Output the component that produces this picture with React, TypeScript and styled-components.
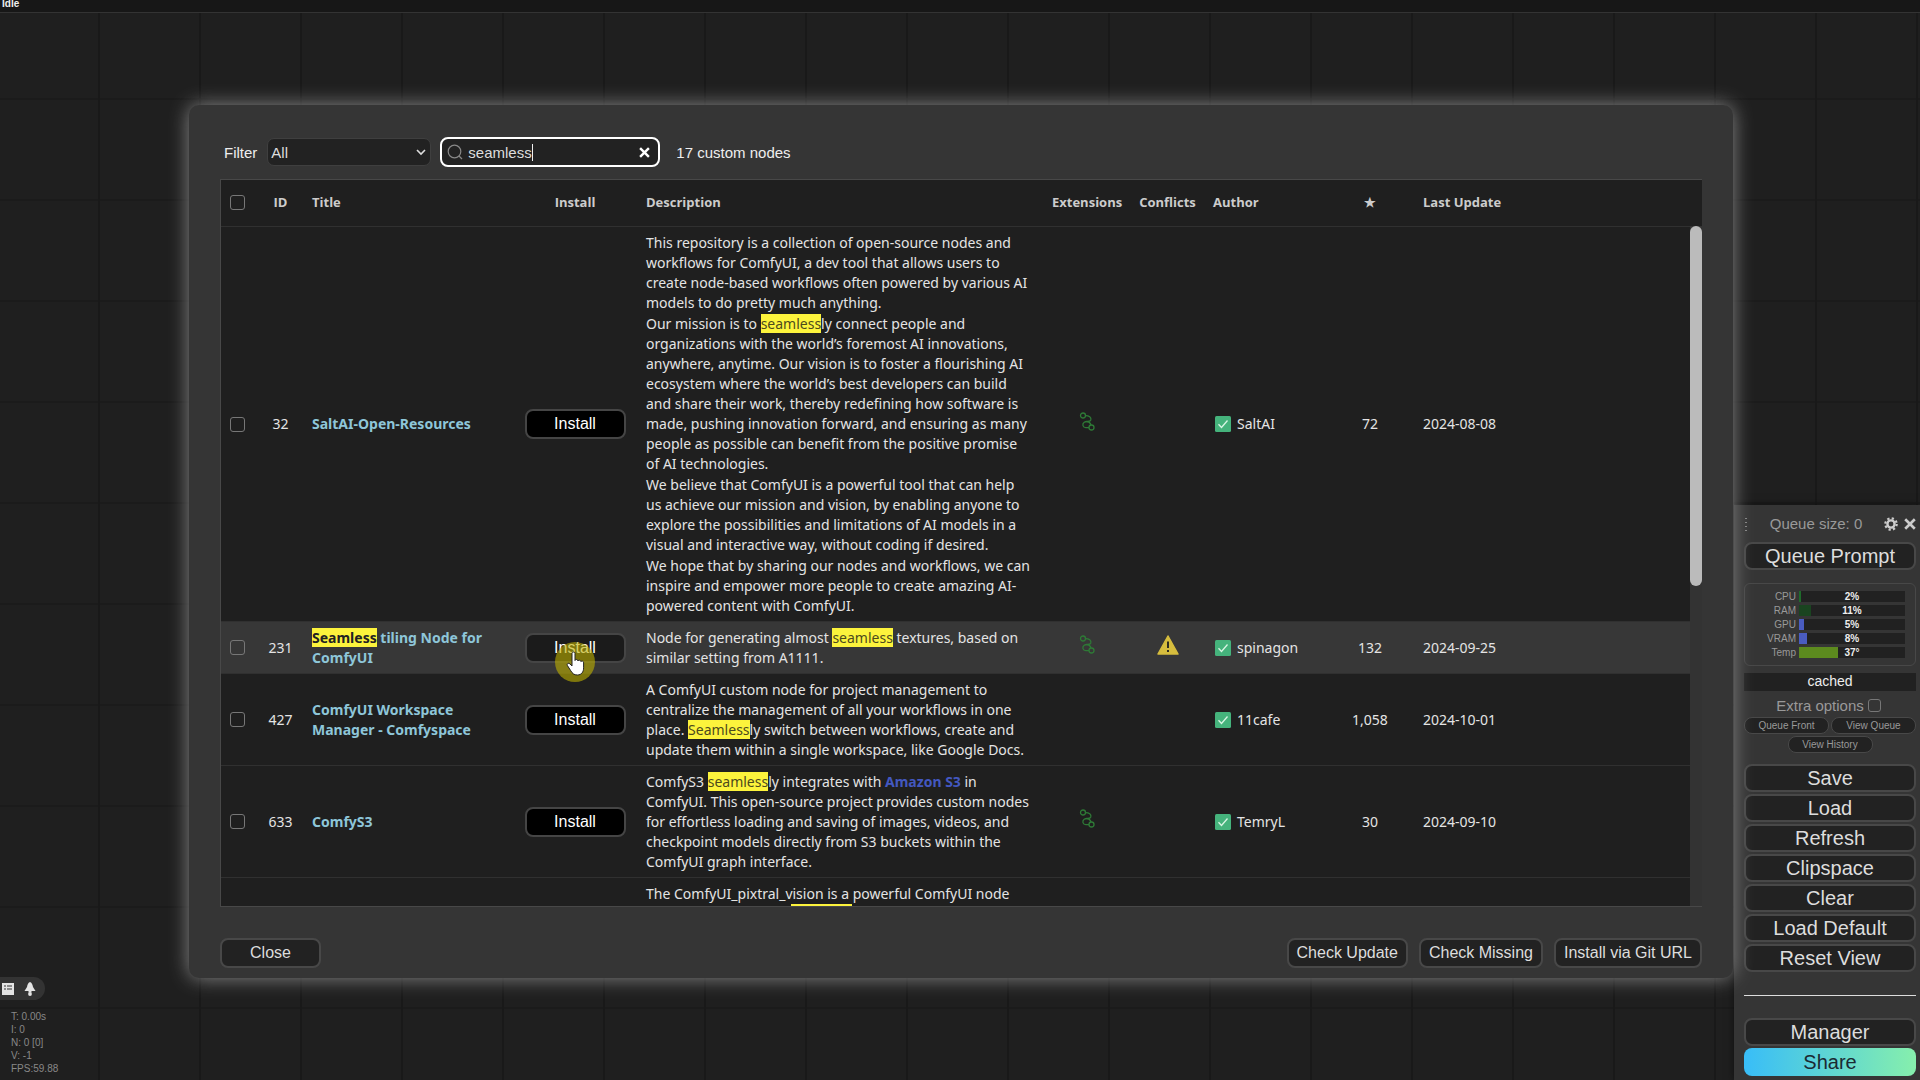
import React from "react";
import styled, { createGlobalStyle, css } from "styled-components";

const ui = `"Liberation Sans", Arial, sans-serif`;
const reading = `"Noto Sans", "Open Sans", sans-serif`;
const heading = `"Open Sans", "Noto Sans", sans-serif`;

const GlobalStyle = createGlobalStyle`
  *, *::before, *::after { box-sizing: border-box; }
  body { margin: 0; background: #1f1f1f; color: #ddd; font-family: ${ui}; overflow: hidden; }
  p { margin: 0; }
`;

const Page = styled.div`
  position: relative;
  display: flex;
  flex-direction: column;
  height: 100vh;
  overflow: hidden;
  background-color: #1f1f1f;
  background-image: linear-gradient(to right, #191919 2px, transparent 2px),
    linear-gradient(to bottom, #1b1b1b 2px, transparent 2px);
  background-size: 101px 101px;
  background-position: 98px 98px;
`;

const StatusBar = styled.header`
  height: 13px;
  padding-left: 2px;
  background: #171717;
  border-bottom: 1px solid #333;
  color: #eee;
  font-size: 10px;
  font-weight: bold;
  line-height: 7px;
`;

const Corner = styled.div`
  position: absolute;
  left: 0;
  bottom: 5px;
  display: flex;
  flex-direction: column;
  gap: 10px;
  align-items: flex-start;
`;

const Pill = styled.div`
  display: flex;
  align-items: center;
  gap: 9px;
  height: 23px;
  padding: 0 9px 0 1px;
  border-radius: 0 12px 12px 0;
  background: #333;
`;

const Stats = styled.div`
  padding-left: 11px;
  color: #888;
  font-size: 10px;
  line-height: 13px;
`;

const Modal = styled.main`
  position: absolute;
  z-index: 2;
  inset: 105px 187px 102px 189px;
  display: flex;
  flex-direction: column;
  padding: 32px 31px 10px;
  border-radius: 10px;
  background: #353535;
  box-shadow: 0 0 20px #888;
`;

const Toolbar = styled.div`
  display: flex;
  align-items: center;
  height: 30px;
  margin-bottom: 12px;
  padding-left: 4px;
  font-size: 15px;
  color: #eee;
`;

const FilterLabel = styled.label`
  display: flex;
  align-items: center;
  gap: 10px;
`;

const SelectBox = styled.span`
  display: grid;
  align-items: center;
  & > * { grid-area: 1 / 1; }
  & > svg { justify-self: end; margin-right: 5px; pointer-events: none; }
`;

const Select = styled.select`
  width: 164px;
  height: 28px;
  padding: 0 3px;
  appearance: none;
  border: 1px solid #3f3f3f;
  border-radius: 7px;
  background: #222;
  color: #ddd;
  font: 15px ${ui};
`;

const SearchBox = styled.label`
  display: flex;
  align-items: center;
  gap: 5px;
  width: 220px;
  height: 30px;
  margin: 0 16px 0 9px;
  padding: 0 8px 0 5px;
  border: 2px solid #fff;
  border-radius: 8px;
  background: #222;
`;

const Typed = styled.span`
  flex: 1;
  display: flex;
  align-items: center;
  min-width: 0;
`;

const SearchInput = styled.input`
  field-sizing: content;
  max-width: 100%;
  padding: 0;
  border: 0;
  outline: 0;
  background: transparent;
  color: #ddd;
  font: 15px ${ui};
`;

const Caret = styled.span`
  width: 1px;
  height: 17px;
  background: #eee;
`;

const ClearButton = styled.button`
  display: flex;
  padding: 0;
  border: 0;
  background: none;
  color: #fff;
`;

const GridFrame = styled.div`
  flex: 1;
  min-height: 0;
  display: grid;
  grid-template: 46px minmax(0, 1fr) / minmax(0, 1fr) 12px;
  border: 1px solid #484848;
  border-right: 0;
  background: #1f1f1f;
`;

const Table = styled.table`
  grid-area: 1 / 1 / 3 / 3;
  display: flex;
  flex-direction: column;
  min-height: 0;
  font: 14px/20px ${reading};
  color: #e4e4e4;
`;

const rowColumns = css`
  display: grid;
  grid-template-columns: 33px 53px 202px 132px 406px 80px 81px 114px 96px minmax(0, 1fr);
  align-items: center;
`;

const THead = styled.thead`
  display: block;
  flex: none;
`;

const HeadRow = styled.tr`
  ${rowColumns}
  height: 47px;
  border-bottom: 1px solid #303030;
  color: #ccc;
`;

const TBody = styled.tbody`
  display: block;
  flex: 1;
  min-height: 0;
  padding-right: 12px;
  overflow: hidden;
`;

const Row = styled.tr<{ $hovered?: boolean }>`
  ${rowColumns}
  border-bottom: 1px solid #303030;
  background: ${(p) => (p.$hovered ? "#373737" : "transparent")};
`;

const cellBase = css<{ $center?: boolean }>`
  padding: 0 5px;
  text-align: ${(p) => (p.$center ? "center" : "left")};
  white-space: nowrap;
`;
const HeadCell = styled.th<{ $center?: boolean }>`
  ${cellBase}
  padding-bottom: 2px;
  font: bold 13px/20px ${heading};
`;
const Cell = styled.td<{ $center?: boolean }>`
  ${cellBase}
`;

const DescriptionCell = styled(Cell)`
  display: flex;
  flex-direction: column;
  gap: 1px;
  padding: 6px 5px 5px;
  white-space: pre;
`;

const Check = styled.input`
  display: block;
  width: 15px;
  height: 15px;
  margin: 0 auto;
  appearance: none;
  border: 1px solid #777;
  border-radius: 3px;
  background: transparent;
`;

const TitleLink = styled.a`
  color: #8ec6d9;
  font-weight: bold;
  text-decoration: none;
  white-space: pre;
`;

const InlineLink = styled.a`
  color: #4358c0;
  font-weight: bold;
  text-decoration: none;
`;

const Mark = styled.mark`
  background: #fcf33c;
  color: #4c4a1c;
  ${TitleLink} & { color: #222; }
`;

const Author = styled.span`
  display: flex;
  align-items: center;
  gap: 6px;
  padding-left: 2px;
`;

const DialogButton = styled.button<{ $tone?: "black" | "hover" }>`
  min-width: 101px;
  height: 30px;
  padding: 0 8px;
  border: 2px solid ${(p) => (p.$tone ? "#454545" : "#484848")};
  border-radius: 8px;
  background: ${(p) => (p.$tone === "black" ? "#000" : p.$tone === "hover" ? "#1b1b1b" : "#222")};
  color: ${(p) => (p.$tone ? "#fff" : "#ddd")};
  font: 16px ${ui};
  white-space: nowrap;
`;

const InstallSlot = styled.span`
  position: relative;
  display: inline-flex;
`;

const Pointer = styled.span`
  position: absolute;
  left: 30px;
  top: 9px;
  display: flex;
  width: 40px;
  height: 40px;
  padding: 9px 0 0 10px;
  border-radius: 50%;
  background: rgba(190, 176, 0, 0.6);
  pointer-events: none;
`;

const Track = styled.div`
  grid-area: 2 / 2;
  background: #333;
`;
const Thumb = styled.div`
  height: 53%;
  border-radius: 6px;
  background: #bbb;
`;

const Footer = styled.footer`
  display: flex;
  gap: 11px;
  margin-top: 31px;
  & > :first-child { margin-right: auto; }
`;

const Panel = styled.aside`
  position: absolute;
  right: 0;
  bottom: 0;
  display: flex;
  flex-direction: column;
  width: 186px;
  height: 575px;
  padding: 0 4px 0 10px;
  background: #353535;
  box-shadow: 0 0 8px rgba(0, 0, 0, 0.5);
  color: #999;
`;

const PanelHead = styled.div`
  display: flex;
  align-items: center;
  height: 37px;
  font-size: 15px;
`;
const QueueSize = styled.span`
  flex: 1;
  text-align: center;
`;
const HeadActions = styled.span`
  display: flex;
  align-items: center;
  gap: 6px;
`;
const IconButton = styled.button`
  display: flex;
  padding: 0;
  border: 0;
  background: none;
  color: #ccc;
`;

const PanelButton = styled.button<{ $share?: boolean }>`
  width: 100%;
  height: 28px;
  padding: 0;
  border: 2px solid #484848;
  border-radius: 8px;
  background: #222;
  color: #ddd;
  font: 20px/22px ${ui};
  ${(p) =>
    p.$share &&
    css`
      border-color: transparent;
      background: linear-gradient(90deg, #38bdf8, #86efac) border-box;
      color: #1b2a33;
    `}
`;

const Monitor = styled.div`
  display: flex;
  flex-direction: column;
  gap: 3px;
  height: 83px;
  margin: 13px 0 7px;
  padding: 7px 10px;
  border: 1px solid #484848;
  border-radius: 6px;
`;
const Meter = styled.div`
  display: grid;
  grid-template-columns: 41px 1fr;
  gap: 3px;
  height: 11px;
  font-size: 10px;
  line-height: 11px;
  text-align: right;
`;
const Bar = styled.div`
  display: grid;
  background: #212121;
  & > * { grid-area: 1 / 1; }
`;
const Fill = styled.div<{ $color: string }>`
  background: ${(p) => p.$color};
`;
const BarText = styled.span`
  color: #eee;
  font-weight: bold;
  text-align: center;
`;

const Cached = styled.div`
  height: 18px;
  background: #212121;
  color: #eee;
  font-size: 14px;
  line-height: 17px;
  text-align: center;
`;

const Extra = styled.label`
  display: flex;
  justify-content: center;
  align-items: center;
  gap: 4px;
  height: 26px;
  padding: 2px 3px 0 0;
  font-size: 15px;
`;
const SmallCheck = styled(Check)`
  width: 13px;
  height: 13px;
  margin: 0;
`;

const SmallButtons = styled.div`
  display: flex;
  flex-wrap: wrap;
  justify-content: center;
  gap: 2px;
  margin-bottom: 11px;
`;
const SmallButton = styled.button`
  width: 85px;
  height: 17px;
  padding: 0;
  border: 1px solid #484848;
  border-radius: 8px;
  background: #222;
  color: #999;
  font: 10px/14px ${ui};
`;

const Stack = styled.div`
  display: flex;
  flex-direction: column;
  gap: 2px;
`;
const Divider = styled.hr`
  width: 100%;
  height: 1px;
  margin: 23px 0 22px;
  border: 0;
  background: #ddd;
`;

const RouteIcon = () => (
  <svg width="17" height="20" viewBox="0 0 17 20" fill="none" stroke="#2e7a36" strokeWidth="1.3" aria-hidden="true">
    <circle cx="4" cy="3.5" r="2.5" />
    <circle cx="12.5" cy="15.5" r="2.5" />
    <path d="M6.500 3.600C10 3.600 12.500 5.500 11.800 8 11 10.400 7.500 8.800 5.200 10.200 2.800 12 3.800 15.600 6.800 15.600H10" />
    <path d="M7.500 9.400C10 9.800 11.500 11 12 13" />
  </svg>
);

const WarningIcon = () => (
  <svg width="22" height="20" viewBox="0 0 22 20" aria-hidden="true">
    <path d="M11 1 L21 19 H1 Z" fill="#d6bd3e" stroke="#d6bd3e" strokeWidth="1.5" strokeLinejoin="round" />
    <path d="M11 6.500v6.500M11 15v2" stroke="#1d1d1d" strokeWidth="1.8" />
  </svg>
);

const VerifiedIcon = () => (
  <svg width="16" height="16" viewBox="0 0 16 16" aria-hidden="true">
    <rect width="16" height="16" rx="1.5" fill="#45b37c" />
    <path d="M3.500 8.200l3 3.300 6-7" fill="none" stroke="#d9f5e4" strokeWidth="1.3" />
  </svg>
);

const HandIcon = () => (
  <svg width="22" height="25" viewBox="0 0 22 25" aria-hidden="true">
    <path
      d="M7 2.500c0-2 3-2 3 0v7c.5-1.600 3-1.300 3 .5.600-1.300 2.800-1 2.900.6.800-1 2.700-.6 2.700 1.200v5c0 4-2 7.200-6.200 7.200-3.400 0-5-1.500-6.600-4.200L2.400 14.500c-1-1.800 1.200-3 2.500-1.600L7 15z"
      fill="#fff"
      stroke="#222"
      strokeWidth="1"
    />
  </svg>
);

const CrossIcon = ({ size }: { size: number }) => (
  <svg width={size} height={size} viewBox="0 0 10 10" aria-hidden="true">
    <path d="M1 1l8 8M9 1l-8 8" stroke="currentColor" strokeWidth="2.2" />
  </svg>
);

const GearIcon = () => (
  <svg width="14" height="14" viewBox="0 0 14 14" aria-hidden="true">
    <circle cx="7" cy="7" r="3.6" fill="none" stroke="currentColor" strokeWidth="2.4" />
    <circle cx="7" cy="7" r="5.7" fill="none" stroke="currentColor" strokeWidth="2.2" strokeDasharray="2.24 2.24" />
  </svg>
);

type NodeRow = {
  id: string;
  title: React.ReactNode;
  description: React.ReactNode[];
  extensions?: boolean;
  conflict?: boolean;
  author: string;
  stars: string;
  updated: string;
  hovered?: boolean;
};

const rows: NodeRow[] = [
  {
    id: "32",
    title: "SaltAI-Open-Resources",
    description: [
      "This repository is a collection of open-source nodes and\nworkflows for ComfyUI, a dev tool that allows users to\ncreate node-based workflows often powered by various AI\nmodels to do pretty much anything.",
      <>
        Our mission is to <Mark>seamless</Mark>
        {"ly connect people and\norganizations with the world’s foremost AI innovations,\nanywhere, anytime. Our vision is to foster a flourishing AI\necosystem where the world’s best developers can build\nand share their work, thereby redefining how software is\nmade, pushing innovation forward, and ensuring as many\npeople as possible can benefit from the positive promise\nof AI technologies."}
      </>,
      "We believe that ComfyUI is a powerful tool that can help\nus achieve our mission and vision, by enabling anyone to\nexplore the possibilities and limitations of AI models in a\nvisual and interactive way, without coding if desired.",
      "We hope that by sharing our nodes and workflows, we can\ninspire and empower more people to create amazing AI-\npowered content with ComfyUI.",
    ],
    extensions: true,
    author: "SaltAI",
    stars: "72",
    updated: "2024-08-08",
  },
  {
    id: "231",
    title: (
      <>
        <Mark>Seamless</Mark>
        {" tiling Node for\nComfyUI"}
      </>
    ),
    description: [
      <>
        Node for generating almost <Mark>seamless</Mark>
        {" textures, based on\nsimilar setting from A1111."}
      </>,
    ],
    extensions: true,
    conflict: true,
    author: "spinagon",
    stars: "132",
    updated: "2024-09-25",
    hovered: true,
  },
  {
    id: "427",
    title: "ComfyUI Workspace\nManager - Comfyspace",
    description: [
      <>
        {"A ComfyUI custom node for project management to\ncentralize the management of all your workflows in one\nplace. "}
        <Mark>Seamless</Mark>
        {"ly switch between workflows, create and\nupdate them within a single workspace, like Google Docs."}
      </>,
    ],
    author: "11cafe",
    stars: "1,058",
    updated: "2024-10-01",
  },
  {
    id: "633",
    title: "ComfyS3",
    description: [
      <>
        ComfyS3 <Mark>seamless</Mark>ly integrates with <InlineLink href="#s3">Amazon S3</InlineLink>
        {" in\nComfyUI. This open-source project provides custom nodes\nfor effortless loading and saving of images, videos, and\ncheckpoint models directly from S3 buckets within the\nComfyUI graph interface."}
      </>,
    ],
    extensions: true,
    author: "TemryL",
    stars: "30",
    updated: "2024-09-10",
  },
];

const meters = [
  { label: "CPU", value: 2, text: "2%", color: "#1f6b2b" },
  { label: "RAM", value: 11, text: "11%", color: "#1a4420" },
  { label: "GPU", value: 5, text: "5%", color: "#4a5cc0" },
  { label: "VRAM", value: 8, text: "8%", color: "#4a5cc0" },
  { label: "Temp", value: 37, text: "37°", color: "#5c8a1e" },
];

export default function App() {
  return (
    <Page>
      <GlobalStyle />
      <StatusBar>Idle</StatusBar>

      <Modal>
        <Toolbar>
          <FilterLabel>
            Filter
            <SelectBox>
              <Select defaultValue="All">
                <option>All</option>
              </Select>
              <svg width="10" height="7" viewBox="0 0 10 7" aria-hidden="true">
                <path d="M1 1l4 4 4-4" fill="none" stroke="#ddd" strokeWidth="1.6" />
              </svg>
            </SelectBox>
          </FilterLabel>
          <SearchBox>
            <svg width="16" height="16" viewBox="0 0 16 16" fill="none" stroke="#888" strokeWidth="1.2" aria-hidden="true">
              <circle cx="7.5" cy="7.5" r="6.3" />
              <path d="M12 12l3 3" />
            </svg>
            <Typed>
              <SearchInput aria-label="Search" defaultValue="seamless" />
              <Caret />
            </Typed>
            <ClearButton aria-label="Clear search">
              <CrossIcon size={11} />
            </ClearButton>
          </SearchBox>
          <span>17 custom nodes</span>
        </Toolbar>

        <GridFrame>
          <Table>
            <THead>
              <HeadRow>
                <HeadCell $center>
                  <Check type="checkbox" aria-label="Select all" />
                </HeadCell>
                <HeadCell $center>ID</HeadCell>
                <HeadCell>Title</HeadCell>
                <HeadCell $center>Install</HeadCell>
                <HeadCell>Description</HeadCell>
                <HeadCell $center>Extensions</HeadCell>
                <HeadCell $center>Conflicts</HeadCell>
                <HeadCell>Author</HeadCell>
                <HeadCell $center>★</HeadCell>
                <HeadCell>Last Update</HeadCell>
              </HeadRow>
            </THead>
            <TBody>
              {rows.map((row) => (
                <Row key={row.id} $hovered={row.hovered}>
                  <Cell $center>
                    <Check type="checkbox" aria-label={`Select ${row.id}`} />
                  </Cell>
                  <Cell $center>{row.id}</Cell>
                  <Cell>
                    <TitleLink href={`#${row.id}`}>{row.title}</TitleLink>
                  </Cell>
                  <Cell $center>
                    <InstallSlot>
                      <DialogButton $tone={row.hovered ? "hover" : "black"}>Install</DialogButton>
                      {row.hovered && (
                        <Pointer>
                          <HandIcon />
                        </Pointer>
                      )}
                    </InstallSlot>
                  </Cell>
                  <DescriptionCell>
                    {row.description.map((text, i) => (
                      <p key={i}>{text}</p>
                    ))}
                  </DescriptionCell>
                  <Cell $center>{row.extensions && <RouteIcon />}</Cell>
                  <Cell $center>{row.conflict && <WarningIcon />}</Cell>
                  <Cell>
                    <Author>
                      <VerifiedIcon />
                      {row.author}
                    </Author>
                  </Cell>
                  <Cell $center>{row.stars}</Cell>
                  <Cell>{row.updated}</Cell>
                </Row>
              ))}
              <Row>
                <Cell />
                <Cell />
                <Cell />
                <Cell />
                <DescriptionCell>
                  <p>
                    {"The ComfyUI_pixtral_vision is a powerful ComfyUI node\ndesigned to integrate "}
                    <Mark>seamless</Mark>ly
                  </p>
                </DescriptionCell>
              </Row>
            </TBody>
          </Table>
          <Track>
            <Thumb />
          </Track>
        </GridFrame>

        <Footer>
          <DialogButton>Close</DialogButton>
          <DialogButton>Check Update</DialogButton>
          <DialogButton>Check Missing</DialogButton>
          <DialogButton>Install via Git URL</DialogButton>
        </Footer>
      </Modal>

      <Panel>
        <PanelHead>
          <svg width="4" height="14" viewBox="0 0 4 14" fill="#888" aria-hidden="true">
            <path d="M1 1h2v1H1zM1 5h2v1H1zM1 9h2v1H1zM1 13h2v1H1z" />
          </svg>
          <QueueSize>Queue size: 0</QueueSize>
          <HeadActions>
            <IconButton aria-label="Settings">
              <GearIcon />
            </IconButton>
            <IconButton aria-label="Close menu">
              <CrossIcon size={12} />
            </IconButton>
          </HeadActions>
        </PanelHead>
        <PanelButton>Queue Prompt</PanelButton>
        <Monitor>
          {meters.map((m) => (
            <Meter key={m.label}>
              <span>{m.label}</span>
              <Bar>
                <Fill $color={m.color} style={{ width: `${m.value}%` }} />
                <BarText>{m.text}</BarText>
              </Bar>
            </Meter>
          ))}
        </Monitor>
        <Cached>cached</Cached>
        <Extra>
          Extra options
          <SmallCheck type="checkbox" />
        </Extra>
        <SmallButtons>
          <SmallButton>Queue Front</SmallButton>
          <SmallButton>View Queue</SmallButton>
          <SmallButton>View History</SmallButton>
        </SmallButtons>
        <Stack>
          {["Save", "Load", "Refresh", "Clipspace", "Clear", "Load Default", "Reset View"].map((name) => (
            <PanelButton key={name}>{name}</PanelButton>
          ))}
        </Stack>
        <Divider />
        <Stack>
          <PanelButton>Manager</PanelButton>
          <PanelButton $share>Share</PanelButton>
        </Stack>
      </Panel>

      <Corner>
        <Pill>
          <svg width="14" height="14" viewBox="0 0 14 14" aria-hidden="true">
            <path d="M1 1h12v12H1z" fill="#e4e4e4" />
            <path d="M3 4h2M6 4h5M3 7h2M6 7h5" stroke="#333" strokeWidth="1.2" />
          </svg>
          <svg width="12" height="16" viewBox="0 0 12 16" fill="#e4e4e4" aria-hidden="true">
            <path d="M6 1c2 1 2.500 2.500 3 5l2.500 4H.5L3 6c.5-2.500 1-4 3-5zM4.500 10h3v1.500h-3z" />
            <circle cx="6" cy="13" r="1.9" />
          </svg>
        </Pill>
        <Stats>
          <div>T: 0.00s</div>
          <div>I: 0</div>
          <div>N: 0 [0]</div>
          <div>V: -1</div>
          <div>FPS:59.88</div>
        </Stats>
      </Corner>
    </Page>
  );
}
